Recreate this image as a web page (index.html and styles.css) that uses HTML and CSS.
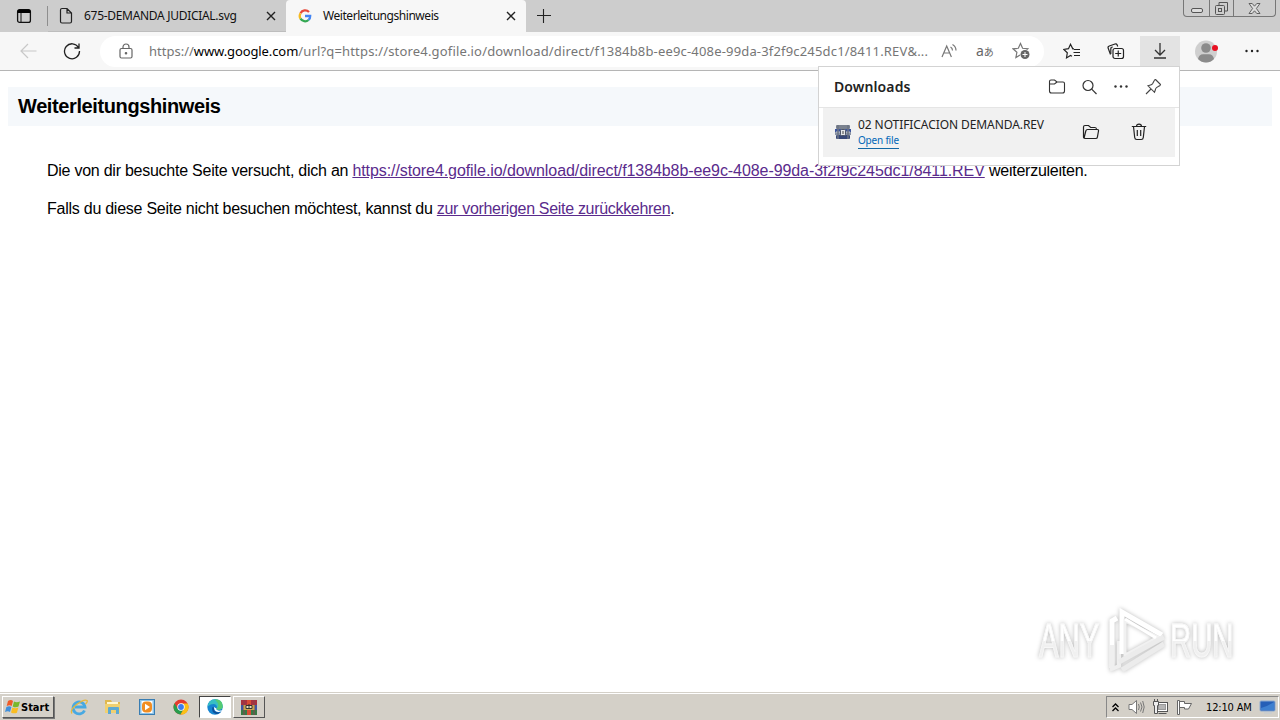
FILE: index.html
```
<!DOCTYPE html>
<html lang="de">
<head>
  <meta charset="UTF-8" />
  <title>Weiterleitungshinweis</title>
  <link rel="stylesheet" href="styles.css">
</head>
<body>
  <div class="tab-strip">
    <svg class="tab-menu" width="16" height="16" viewBox="0 0 16 16"><rect x="1.6" y="1.6" width="12.8" height="12.8" rx="2" fill="none" stroke="#111" stroke-width="1.3"/><path d="M1.5 5V3.5a2 2 0 0 1 2-2h9a2 2 0 0 1 2 2V5z"/><path d="M5 5v9" stroke="#111"/></svg>
    <span class="divider"></span>
    <div class="tab">
      <svg width="16" height="18" viewBox="0 0 16 18" fill="none" stroke="#222" stroke-width="1.2"><path d="M4 1.500h5l4.500 4.500v8.500q0 1.500-1.500 1.500H4q-1.500 0-1.500-1.500V3q0-1.500 1.500-1.500zM9 1.500V6h4.500"/></svg>
      <span class="tab-title svg-title">675-DEMANDA JUDICIAL.svg</span>
      <svg class="close" width="10" height="10" viewBox="0 0 10 10"><path d="M1 1l8 8M9 1L1 9" stroke="#222" stroke-width="1.4"/></svg>
    </div>
    <div class="tab active">
      <svg width="14" height="14" viewBox="0 0 14 14" fill="none" stroke-width="2.3"><path d="M11 3A5.300 5.300 0 0 0 2.500 4.300" stroke="#e64a3b"/><path d="M2.500 4.300a5.300 5.300 0 0 0 0 5.400" stroke="#f5ba20"/><path d="M2.500 9.700A5.300 5.300 0 0 0 10.500 11" stroke="#34a853"/><path d="M7 7h5.200a5.200 5.200 0 0 1-1.700 4" stroke="#4285f4"/></svg>
      <span class="tab-title page-title">Weiterleitungshinweis</span>
      <svg class="close" width="10" height="10" viewBox="0 0 10 10"><path d="M1 1l8 8M9 1L1 9" stroke="#222" stroke-width="1.4"/></svg>
    </div>
    <svg class="new-tab" width="14" height="14" viewBox="0 0 14 14"><path d="M6.500 0v14M0 6.500h14" stroke="#222" stroke-width="1.1"/></svg>
    <div class="window-buttons">
      <span class="win-min"><svg width="12" height="5" viewBox="0 0 12 5"><rect x=".5" y=".5" width="11" height="4" rx="1.500" fill="#ddd" stroke="#555"/></svg></span>
      <span class="win-max"><svg width="13" height="13" viewBox="0 0 13 13" fill="none" stroke="#555"><path d="M4 4V.5h8.500v8.500H9.500"/><rect x=".5" y="3.500" width="9" height="9" rx="1"/><rect x="3.500" y="6.500" width="3" height="3"/></svg></span>
      <span class="win-close"><svg width="13" height="11" viewBox="0 0 13 11" fill="#ddd" stroke="#555" stroke-width=".9"><path d="M1 .5h3.200l2.300 2.700L8.800.5H12L8.400 5.500l3.600 5H8.800L6.500 7.800l-2.300 2.700H1l3.600-5z"/></svg></span>
    </div>
  </div>

  <div class="toolbar">
    <svg class="back" width="18" height="16" viewBox="0 0 18 16" fill="none" stroke="#c8c8c8" stroke-width="1.2"><path d="M8 1L1 8l7 7M1 8h15.500"/></svg>
    <svg class="reload" width="18" height="18" viewBox="0 0 18 18" fill="none" stroke="#222" stroke-width="1.3"><path d="M15.500 5.500A7.500 7.500 0 1 0 16.500 9M16 1.500v4.500h-4.500"/></svg>
    <div class="address">
      <svg class="lock" width="14" height="16" viewBox="0 0 14 16" fill="none" stroke="#666" stroke-width="1.200"><rect x="1" y="5.500" width="12" height="9.500" rx="1.500"/><path d="M4 5.500V4a3 3 0 0 1 6 0v1.500"/><circle cx="7" cy="10.300" r=".7" fill="#666"/></svg>
      <div class="url"><span class="url-scheme">https://</span><span class="url-host">www.google.com</span><span class="url-path">/url?q=https://store4.gofile.io/download/direct/f1384b8b-ee9c-408e-99da-3f2f9c245dc1/8411.REV&amp;...</span></div>
      <svg class="read" width="17" height="16" viewBox="0 0 17 16" fill="none" stroke="#777" stroke-width="1.200"><path d="M1 14L5.700 3l4.700 11M2.700 10h6M9.500 4q2 1 2 3.500M11.500 1.500q3.500 2 3.500 6"/></svg>
      <span class="translate">a<small>あ</small></span>
      <svg class="add-fav" width="19" height="18" viewBox="0 0 19 18"><path d="M8.500 1.500l2.100 4.800 5.200.5-3.900 3.500 1 5.200-4.400-2.700-4.600 2.700 1-5.200L1 6.800l5.300-.5z" fill="none" stroke="#777" stroke-width="1.200"/><circle cx="13" cy="12.500" r="5.200" fill="#fff"/><circle cx="13" cy="12.500" r="4.500" fill="#666"/><path d="M13 10v5M10.500 12.500h5" stroke="#fff"/></svg>
    </div>
    <svg class="favorites" width="18" height="17" viewBox="0 0 18 17" fill="none" stroke="#222" stroke-width="1.200"><path d="M11 5.800H9.800L7.500 1.300 5.500 5.700l-4.700.7 3.500 3.400-.8 5.100 4-2.400 1.500.8M11 6.500h6M10.500 9.500h6.500M11 12.500h6"/></svg>
    <svg class="collections" width="18" height="17" viewBox="0 0 18 17" fill="none" stroke="#222" stroke-width="1.200"><path d="M3.500 11.500L1.200 5.300q-.6-1.700 1.100-2.300L8 1q1.500-.5 2.200 1l.5 1.500"/><rect x="6" y="5.500" width="10.500" height="10" rx="2"/><path d="M3.800 11V6q0-2 2-2M11.250 7.500v6M8.200 10.500h6"/></svg>
    <div class="download-button"><svg width="14" height="17" viewBox="0 0 14 17" fill="none" stroke="#333" stroke-width="1.300"><path d="M7 1v12M2 8l5 5 5-5M1 16h12"/></svg></div>
    <svg class="profile" width="24" height="23" viewBox="0 0 24 23"><circle cx="11" cy="11.500" r="11" fill="#cfcfcf"/><circle cx="11" cy="8" r="4.800" fill="#8b8b8b"/><path d="M3 19q1-4.800 5-4.800h6q4 0 5 4.800-3.500 3.500-8 3.500T3 19z" fill="#8b8b8b"/><circle cx="20" cy="8" r="3" fill="#e81123"/></svg>
    <svg class="more" width="14" height="4" viewBox="0 0 14 4" fill="#222"><circle cx="1.500" cy="2" r="1.200"/><circle cx="7" cy="2" r="1.200"/><circle cx="12.500" cy="2" r="1.200"/></svg>
  </div>

  <div class="page">
    <h1>Weiterleitungshinweis</h1>
    <p class="notice">Die von dir besuchte Seite versucht, dich an <a href="#">https://store4.gofile.io/download/direct/f1384b8b-ee9c-408e-99da-3f2f9c245dc1/8411.REV</a> weiterzuleiten.</p>
    <p class="return">Falls du diese Seite nicht besuchen möchtest, kannst du <a href="#">zur vorherigen Seite zurückkehren</a>.</p>
  </div>

  <div class="downloads">
    <div class="downloads-head">
      <span class="downloads-title">Downloads</span>
      <svg width="18" height="15" viewBox="0 0 18 15" fill="none" stroke="#333" stroke-width="1.100"><path d="M1.500 12V2.500q0-1.500 1.500-1.500h3.500L9 3h6q1.500 0 1.500 1.500V12q0 2-2 2h-11q-2 0-2-2zM1.500 5h5L9 3"/></svg>
      <svg width="16" height="16" viewBox="0 0 16 16" fill="none" stroke="#333" stroke-width="1.200"><circle cx="6" cy="6.500" r="5"/><path d="M9.700 10.200L14.500 15"/></svg>
      <svg width="14" height="4" viewBox="0 0 14 4" fill="#333"><circle cx="1.500" cy="1.500" r="1.200"/><circle cx="7" cy="1.500" r="1.200"/><circle cx="12.500" cy="1.500" r="1.200"/></svg>
      <svg width="17" height="17" viewBox="0 0 17 17" fill="none" stroke="#444" stroke-width="1.100"><path d="M10.500 1.500l5 5q-.3 1.500-1.500 1.600l-2.500 1.500q-1 .8-1.200 2.400l-.8 2.300L3 7.800l2.500-.8q1.500-.3 2.200-1.500L9 3q.5-1.400 1.500-1.500zM6 11l-5 5"/></svg>
    </div>
    <div class="download-item">
      <svg class="archive" width="16" height="16" viewBox="0 0 16 16"><rect x="1" y="1" width="14" height="4" rx="1" fill="#7b828f"/><rect x="0" y="5" width="16" height="3" fill="#3c549c"/><rect x="0" y="8" width="16" height="3" fill="#8b94a5"/><rect x="1" y="11" width="14" height="4" rx="1" fill="#374879"/><path d="M1 8h14" stroke="#c5cbd4"/><path d="M3 1v14M13 1v14" stroke="#6c7484" stroke-width="1.500"/><rect x="5.500" y="5.500" width="5" height="6" rx="1" fill="#e4e7eb" stroke="#4d5568"/><path d="M8 7v3" stroke="#444"/></svg>
      <div class="file">
        <span class="file-name">02 NOTIFICACION DEMANDA.REV</span>
        <a class="open-file" href="#">Open file</a>
      </div>
      <svg class="open-folder" width="18" height="16" viewBox="0 0 18 16" fill="none" stroke="#222" stroke-width="1.200"><path d="M1.500 13V3q0-1.500 1.500-1.500h3.500L8.700 3.500H13q1.500 0 1.500 2M3.500 14.500h10.200q1.500 0 1.700-1.400L16.500 7q.3-1.500-1.200-1.500H5.600Q4.200 5.500 3.800 7l-1.500 6q-.3 1.500 1.200 1.500-2 0-2-1.500"/></svg>
      <svg class="trash" width="16" height="18" viewBox="0 0 16 18" fill="none" stroke="#222" stroke-width="1.200"><path d="M.8 3.500h14.400M5.500 3.500q0-2.300 2.500-2.300t2.500 2.300M2.500 3.500l1.200 11q.2 2 2 2h4.600q1.800 0 2-2l1.200-11M6.300 7v6M9.700 7v6"/></svg>
    </div>
  </div>

  <div class="watermark">
    <span class="mark-text">ANY</span>
    <svg width="60" height="66" viewBox="0 0 60 66" fill="none"><path d="M4 61V14l5-3" stroke="#fff" stroke-width="5"/><path d="M4 38v24l7-3V34" stroke="#efefef" stroke-width="4"/><path d="M14 47V5l40 23" stroke="#fff" stroke-width="5"/><path d="M17 14v34l33-18z" stroke="#f1f1f1" stroke-width="3"/><path d="M17 12l31 19" stroke="#fff" stroke-width="3"/><path d="M11 55l45-25M14 63l42-26" stroke="#ececec" stroke-width="5"/></svg>
    <span class="mark-text">RUN</span>
  </div>

  <div class="taskbar">
    <div class="start">
      <svg width="16" height="16" viewBox="0 0 16 16"><path d="M3 2q3-2 5 0L6.700 7q-2-1.500-5 0z" fill="#ef5b28"/><path d="M9 2.500q2.500 1.500 6 0L13.500 7.600q-3 1.400-5.800-.2z" fill="#79b82b"/><path d="M1.400 8q3-1.500 5 0L5 13q-2-1.500-5 0z" fill="#3f8fdc"/><path d="M7.400 8.400q2.500 1.500 6 .2l-1.500 5.200q-3 1.200-5.900-.4z" fill="#fabd22"/></svg>
      <span>Start</span>
    </div>
    <div class="task"><svg width="18" height="18" viewBox="0 0 18 18" fill="none"><path d="M14.500 12.500A6 6 0 1 1 15 9H5" stroke="#48a9e2" stroke-width="2.800"/><path d="M2 15.500Q-.5 12 7 6.300T17 2.500q1 1-1.500 3.500" stroke="#e7b83c" stroke-width="1.300"/></svg></div>
    <div class="task"><svg width="18" height="16" viewBox="0 0 18 16"><path d="M1 1h6l1 2h8v11H1z" fill="#dfb850"/><path d="M3 3h11v5H3z" fill="#fff7d2"/><path d="M1 5h15v9H1z" fill="#f0d070"/><path d="M4 15V9q0-1 1-1h9q1 0 1 1v6h-3v-4H7v4z" fill="#5da9d3"/></svg></div>
    <div class="task"><svg width="16" height="16" viewBox="0 0 16 16"><rect x=".5" y=".5" width="15" height="15" fill="#8dc3e8" stroke="#397db2"/><rect x="2.500" y="2" width="11" height="12" fill="#fff"/><rect x="3" y="2.500" width="10" height="11" rx="4" fill="#f18d22"/><path d="M6 4.800v6.400L11 8z" fill="#fff"/></svg></div>
    <div class="task"><svg width="16" height="16" viewBox="0 0 16 16"><circle cx="8" cy="8" r="7.500" fill="#e33b2e"/><path d="M1.500 4.200A7.500 7.500 0 0 0 7.500 15.500L11 9.500 8 11 4.700 9.500z" fill="#279d4d"/><path d="M8 4.500h6.700A7.500 7.500 0 0 1 7.500 15.500L11.300 9z" fill="#fbc116"/><circle cx="8" cy="8" r="3.700" fill="#fff"/><circle cx="8" cy="8" r="2.900" fill="#3b7ded"/></svg></div>
    <div class="task pressed"><svg width="16" height="16" viewBox="0 0 16 16"><circle cx="8" cy="8" r="7.700" fill="#1685d1"/><path d="M.5 7.500Q1.500.5 8 .3q7.500 0 7.700 7 0 3.400-4.200 3.400-2.200 0-2.200-1.200 1.400-1 .2-3Q6.500 3.300.5 7.500z" fill="#37bfc3"/><path d="M8 .3q7.500 0 7.700 7 0 3.400-4.200 3.400-2.200 0-2.200-1.200Q12 8 11 4.500z" fill="#55cb73"/><path d="M5.500 8q-1.500 5 3 6.800 3 .8 5.300-1.700-7 1.500-7-4.600z" fill="#0c4f99"/><path d="M7 8q0 4.500 4 5 3 .2 4.500-2-2.500 1-4.500.5-2.500-.8-1.700-2z" fill="#fff"/></svg></div>
    <div class="task raised"><svg width="16" height="15" viewBox="0 0 16 15"><path fill="#a8323f" d="M0 0h16v5H0z"/><path fill="#3f56a1" d="M0 5h16v5H0z"/><path fill="#367a45" d="M0 10h16v5H0z"/><path d="M8 0v15" stroke="#d94c35" stroke-width="4"/><path d="M3 0v15M13 0v15" stroke="#8a4050"/><path d="M2.500 5h11v5h-11z" fill="#c9a44d"/><path d="M5 5.500h6v3H5z" fill="#e8e2c6" stroke="#333"/><path d="M8 4v4" stroke="#333"/></svg></div>
    <div class="tray">
      <svg class="chevrons" width="7" height="9" viewBox="0 0 7 9" fill="none" stroke="#000" stroke-width="1.300"><path d="M.5 4l3-3 3 3M.5 8l3-3 3 3"/></svg>
      <svg class="sound" width="17" height="16" viewBox="0 0 17 16" fill="#fff" stroke="#777"><path d="M1 5.500h3L8.500 1.500v13L4 10.500H1z"/><path d="M10.500 5q1.500 3 0 6M12.500 3.500q3 4.500 0 9M14.700 2q3 6 0 12" fill="none"/></svg>
      <svg class="network" width="17" height="16" viewBox="0 0 17 16"><rect x="4.500" y="3.500" width="11" height="9" fill="#fff" stroke="#555"/><rect x="6.500" y="5.500" width="7" height="5" fill="#b5b5b5" stroke="#999"/><path d="M6.500 14.500h8" stroke="#555"/><path d="M1.500 2.500h5v4h-1v8h-3v-8h-1z" fill="#eee" stroke="#555"/><path d="M2.500 0v3M5.500 0v3" stroke="#555"/></svg>
      <svg class="flag" width="17" height="16" viewBox="0 0 17 16" fill="#fff" stroke="#666"><path d="M1.500 15.500V1.500h2v14zM3.500 2.500h5v2h7l-3 5.500H8.500V8.500h-5z"/></svg>
      <span class="clock">12:10 AM</span>
      <svg class="desktop" width="17" height="14" viewBox="0 0 17 14"><rect x="1" y="1" width="15" height="10" rx="1" fill="#265fb7" stroke="#8caad0"/><path d="M2 8Q8 7 15 2v8H2z" fill="#3f80d0"/><path d="M5 13h8" stroke="#c2cbd4"/></svg>
    </div>
  </div>
</body>
</html>
```
FILE: styles.css
```
* {
  box-sizing: border-box;
}
body {
  position: relative;
  display: flex;
  flex-direction: column;
  width: 1280px;
  height: 720px;
  margin: 0;
  overflow: hidden;
  background: #fff;
  font-family: "Noto Sans", "Noto Sans CJK JP", sans-serif;
}
svg {
  display: block;
  flex-shrink: 0;
}

/* tabs */
.tab-strip {
  display: flex;
  align-items: center;
  height: 32px;
  background: #cdcdcd;
}
.tab-menu {
  margin-left: 16px;
}
.divider {
  width: 1px;
  height: 20px;
  margin-left: 15px;
  background: #8e8e8e;
}
.tab {
  display: flex;
  align-items: center;
  width: 238px;
  height: 32px;
  padding-left: 10px;
  border-bottom: 1px solid #bdbdbd;
}
.tab-title {
  margin-left: 10px;
  font-size: 12px;
  line-height: 16px;
  color: #111;
  white-space: nowrap;
}
.svg-title {
  letter-spacing: -0.3px;
}
.page-title {
  margin-left: 11px;
  letter-spacing: -0.45px;
}
.tab .close {
  margin-left: auto;
  margin-right: 10px;
}
.tab.active {
  width: 240px;
  padding-left: 12px;
  border-bottom: 0;
  border-radius: 4px 4px 0 0;
  background: #f7f7f7;
}
.new-tab {
  margin-left: 11px;
}
.window-buttons {
  display: flex;
  align-self: flex-start;
  width: 93px;
  height: 17px;
  margin-left: auto;
  margin-right: 4px;
  border: 1px solid #777;
  border-top: 0;
  border-radius: 0 0 4px 4px;
}
.window-buttons span {
  display: flex;
  align-items: center;
  justify-content: center;
}
.win-min {
  width: 25px;
  padding-top: 4px;
}
.win-max {
  width: 25px;
  border-left: 1px solid #777;
  border-right: 1px solid #777;
}
.win-close {
  flex: 1;
}

/* toolbar */
.toolbar {
  display: flex;
  align-items: center;
  height: 39px;
  border-bottom: 1px solid #b5b5b5;
  background: #f7f7f7;
}
.back {
  margin-left: 20px;
}
.reload {
  margin-left: 25px;
}
.address {
  display: flex;
  align-items: center;
  width: 944px;
  height: 31px;
  margin-left: 19px;
  padding-left: 19px;
  border-radius: 16px;
  background: #fff;
}
.url {
  width: 782px;
  margin-left: 16px;
  font-size: 13px;
  line-height: 18px;
  letter-spacing: 0.17px;
  color: #767676;
  white-space: nowrap;
}
.url-scheme {
  letter-spacing: 0;
}
.url-host {
  letter-spacing: -0.1px;
  color: #000;
}
.read {
  margin-left: 10px;
}
.translate {
  width: 20px;
  margin-left: 18px;
  font-size: 14px;
  line-height: 18px;
  color: #666;
  white-space: nowrap;
}
.translate small {
  font-size: 10px;
}
.add-fav {
  margin-left: 16px;
}
.favorites {
  margin-left: 19px;
}
.collections {
  margin-left: 26px;
}
.download-button {
  display: flex;
  align-items: center;
  justify-content: center;
  align-self: stretch;
  width: 40px;
  margin-top: 4px;
  margin-left: 15px;
  padding-bottom: 5px;
  background: #e3e3e3;
}
.profile {
  margin-left: 15px;
}
.more {
  margin-left: 26px;
}

/* page */
.page {
  height: 621px;
  padding: 16px 8px 0;
  font-family: "Liberation Sans", Arial, sans-serif;
  font-size: 16px;
  color: #000;
}
.page h1 {
  height: 39px;
  margin: 0;
  padding-left: 10px;
  background: #f5f8fb;
  font-size: 20px;
  line-height: 39px;
  letter-spacing: -0.39px;
}
.page p {
  margin: 0 0 0 39px;
  line-height: 18px;
  letter-spacing: -0.25px;
  white-space: nowrap;
}
.page .notice {
  margin-top: 36px;
}
.page .notice a {
  letter-spacing: -0.08px;
}
.page .return {
  margin-top: 20px;
}
.page a {
  color: #5a2b8c;
  text-decoration: underline;
}
.page .return a {
  letter-spacing: -0.31px;
}

/* downloads popup */
.downloads {
  position: absolute;
  top: 66px;
  left: 818px;
  width: 362px;
  height: 100px;
  border: 1px solid #d3d3d3;
  background: #fff;
}
.downloads-head {
  display: flex;
  align-items: center;
  height: 41px;
  padding: 0 17px 1px 15px;
  border-bottom: 1px solid #e5e5e5;
}
.downloads-head svg + svg {
  margin-left: 16px;
}
.downloads-head svg:last-child {
  margin-left: 17px;
}
.downloads-title {
  margin-right: auto;
  font-size: 14px;
  font-weight: 600;
  letter-spacing: 0.1px;
  color: #222;
}
.download-item {
  display: flex;
  align-items: center;
  height: 49px;
  margin: 0 4px;
  padding: 0 28px 2px 12px;
  background: #f1f1f1;
}
.file {
  display: flex;
  flex-direction: column;
  align-items: flex-start;
  margin-left: 7px;
  padding-top: 2px;
}
.file-name {
  font-size: 12px;
  line-height: 17px;
  letter-spacing: -0.08px;
  color: #222;
  white-space: nowrap;
}
.open-file {
  border-bottom: 1px solid #1368a5;
  font-size: 10px;
  line-height: 15px;
  letter-spacing: -0.2px;
  color: #0067b8;
  text-decoration: none;
}
.open-folder {
  margin-left: auto;
}
.trash {
  margin-left: 31px;
}

/* watermark */
.watermark {
  position: absolute;
  top: 607px;
  left: 1039px;
  display: flex;
  align-items: center;
  width: 195px;
  height: 66px;
  filter: drop-shadow(0 0 2px #bbb);
}
.watermark svg {
  margin: 0 2px 0 7px;
}
.mark-text {
  flex-shrink: 0;
  width: 104px;
  margin-right: -42px;
  padding-top: 2px;
  background: linear-gradient(#fff 52%, #f0f0f0 52%);
  background-clip: text;
  -webkit-background-clip: text;
  font-family: "Liberation Sans", Arial, sans-serif;
  font-size: 48px;
  line-height: 66px;
  color: transparent;
  -webkit-text-stroke: 1px #f7f7f7;
  white-space: nowrap;
  transform: scaleX(.61);
  transform-origin: left;
}

/* taskbar */
.taskbar {
  display: flex;
  align-items: center;
  height: 28px;
  padding-top: 1px;
  border-top: 1px solid #d4d0c8;
  background: #d4d0c8;
  box-shadow: inset 0 1px #fff;
}
.start {
  display: flex;
  align-items: center;
  width: 52px;
  height: 22px;
  margin: 0 9px 0 2px;
  padding-left: 2px;
  border: 1px solid;
  border-color: #fff #555 #555 #fff;
  box-shadow: 1px 1px #777;
  font-family: "DejaVu Sans Condensed", "DejaVu Sans", sans-serif;
  font-size: 11px;
  font-weight: bold;
}
.task {
  display: flex;
  align-items: center;
  justify-content: center;
  width: 32px;
  height: 22px;
  margin-right: 2px;
}
.pressed {
  border: 1px solid;
  border-color: #444 #fff #fff #444;
  background: #fff;
}
.raised {
  border: 1px solid;
  border-color: #fff #555 #555 #fff;
}
.tray {
  display: flex;
  align-items: center;
  width: 173px;
  height: 22px;
  margin-left: auto;
  margin-right: 1px;
  padding-left: 5px;
  border: 1px solid;
  border-color: #888 #fff #fff #888;
}
.sound {
  margin-left: 9px;
}
.network,
.flag {
  margin-left: 7px;
}
.clock {
  width: 48px;
  margin-left: 13px;
  font-family: "DejaVu Sans Condensed", "DejaVu Sans", sans-serif;
  font-size: 11px;
  letter-spacing: -0.15px;
  white-space: nowrap;
}
.desktop {
  margin-left: 5px;
}
```
